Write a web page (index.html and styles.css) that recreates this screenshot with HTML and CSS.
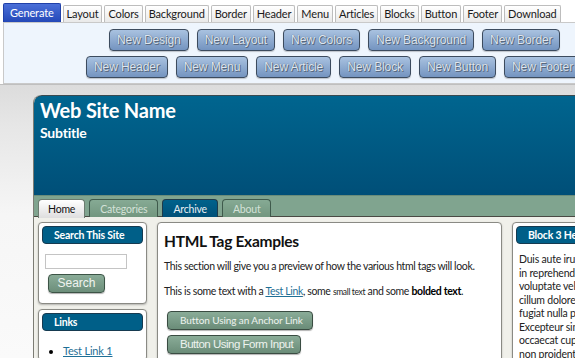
FILE: index.html
```html
<!DOCTYPE html>
<html>
<head>
<meta charset="utf-8">
<link rel="stylesheet" href="styles.css">
</head>
<body>
<div class="toolbar">
  <div class="tabs">
    <span class="tab active">Generate</span>
    <span class="tab">Layout</span>
    <span class="tab">Colors</span>
    <span class="tab">Background</span>
    <span class="tab">Border</span>
    <span class="tab">Header</span>
    <span class="tab">Menu</span>
    <span class="tab">Articles</span>
    <span class="tab">Blocks</span>
    <span class="tab">Button</span>
    <span class="tab">Footer</span>
    <span class="tab">Download</span>
  </div>
  <div class="panel">
    <div class="row row1">
      <span class="gbtn">New Design</span>
      <span class="gbtn">New Layout</span>
      <span class="gbtn">New Colors</span>
      <span class="gbtn">New Background</span>
      <span class="gbtn">New Border</span>
    </div>
    <div class="row row2">
      <span class="gbtn">New Header</span>
      <span class="gbtn">New Menu</span>
      <span class="gbtn">New Article</span>
      <span class="gbtn">New Block</span>
      <span class="gbtn">New Button</span>
      <span class="gbtn">New Footer</span>
    </div>
  </div>
</div>
<div class="stage">
  <div class="page">
    <header class="site-header">
      <h1>Web Site Name</h1>
      <h2>Subtitle</h2>
    </header>
    <nav class="menu">
      <a class="mtab current">Home</a>
      <a class="mtab">Categories</a>
      <a class="mtab hover">Archive</a>
      <a class="mtab">About</a>
    </nav>
    <div class="content">
      <aside class="sidebar">
        <div class="block">
          <div class="block-head">Search This Site</div>
          <div class="block-body search">
            <input class="field" type="text">
            <span class="sbtn">Search</span>
          </div>
        </div>
        <div class="block">
          <div class="block-head">Links</div>
          <ul class="links">
            <li><a href="#">Test Link 1</a></li>
          </ul>
        </div>
      </aside>
      <main class="article">
        <h3>HTML Tag Examples</h3>
        <p>This section will give you a preview of how the various html tags will look.</p>
        <p>This is some text with a <a href="#">Test Link</a>, some <small>small text</small> and some <b>bolded text</b>.</p>
        <div class="btns">
          <span class="abtn">Button Using an Anchor Link</span>
          <span class="ibtn">Button Using Form Input</span>
        </div>
      </main>
      <aside class="right">
        <div class="block">
          <div class="block-head">Block 3 Header</div>
          <p class="lorem">Duis aute irure dolor<br>in reprehenderit in<br>voluptate velit esse<br>cillum dolore eu<br>fugiat nulla pariatur.<br>Excepteur sint<br>occaecat cupidatat<br>non proident, sunt in<br>culpa qui officia.</p>
        </div>
      </aside>
    </div>
  </div>
</div>
</body>
</html>
```
FILE: styles.css
```css
html, body {
  margin: 0;
  padding: 0;
}
body {
  width: 575px;
  height: 358px;
  overflow: hidden;
  font-family: Lato, "Open Sans", sans-serif;
  letter-spacing: -0.2px;
  background: #f6f6f4;
}
.toolbar {
  padding: 3px 0 0 3px;
  background: #fff;
  width: 800px;
}
.tabs {
  display: flex;
  align-items: flex-end;
  gap: 2px;
  height: 19px;
}
.tab {
  height: 17px;
  box-sizing: border-box;
  padding: 0 3px;
  font-size: 11px;
  letter-spacing: -0.15px;
  line-height: 16px;
  color: #1a1a1a;
  border: 1px solid #bdbdbd;
  border-bottom: none;
  border-radius: 2px 2px 0 0;
  background: linear-gradient(#ffffff, #e9e9e9);
}
.tab.active {
  height: 19px;
  line-height: 18px;
  padding: 0 6px;
  color: #fff;
  border-color: #2040a8;
  background: linear-gradient(#4a6fd8, #2448b8);
}
.panel {
  height: 62px;
  box-sizing: border-box;
  border: 1px solid #c9c9c9;
  border-right: none;
  background: #eef5fd;
  padding-top: 6px;
  display: flex;
  flex-direction: column;
  gap: 5px;
}
.row {
  display: flex;
  gap: 8px;
}
.row1 { padding-left: 105px; }
.row2 { padding-left: 82px; }
.gbtn {
  height: 22px;
  box-sizing: border-box;
  padding: 0 7px;
  border: 1px solid #3c4b5e;
  border-radius: 4px;
  background: linear-gradient(#a9c2e0, #7494c0);
  color: #dfe6f0;
  text-shadow: 0 0 1px #4a5a70, 1px 1px 0 #5a6a80;
  font-family: "Liberation Sans", Arial, sans-serif;
  letter-spacing: -0.1px;
  font-size: 12px;
  line-height: 20px;
  white-space: nowrap;
  box-shadow: 0 1px 1px rgba(0,0,0,0.2);
}
.stage {
  height: 272px;
  background: linear-gradient(#dcdcdc 0px, #e6e6e6 40px, #f6f6f6 130px, #fafafa 272px);
  border-top: 1px solid #bfbfbf;
  padding: 10px 0 0 33px;
}
.page {
  width: 760px;
  border-left: 1px solid #7c7c74;
  border-radius: 8px 0 0 0;
  background: #f0f0ea;
  overflow: hidden;
}
.site-header {
  height: 100px;
  box-sizing: border-box;
  padding: 2px 0 0 6px;
  background: linear-gradient(#00658f, #004f78);
  border-top: 1px solid #3a4a50;
  border-radius: 8px 0 0 0;
  color: #fff;
}
.site-header h1 {
  margin: 0;
  font-size: 20px;
  line-height: 24px;
  font-weight: 700;
}
.site-header h2 {
  margin: 2px 0 0;
  font-size: 14px;
  line-height: 18px;
  font-weight: 700;
}
.menu {
  height: 22px;
  box-sizing: border-box;
  border-top: 1px solid #6a8c7a;
  border-bottom: 1px solid #4a4a44;
  background: #80a48f;
  padding: 3px 0 0 4px;
  display: flex;
  gap: 4px;
}
.mtab {
  height: 18px;
  box-sizing: border-box;
  padding: 0 10px;
  border: 1px solid #3f5a4c;
  border-bottom: none;
  border-radius: 4px 4px 0 0;
  background: linear-gradient(#86aa94, #72967f);
  color: #d4e2d8;
  font-size: 10.5px;
  line-height: 18px;
}
.mtab.current {
  height: 19px;
  padding: 0 9px;
  background: linear-gradient(#ffffff, #dedede);
  border-color: #6c7c70;
  color: #111;
}
.mtab.hover {
  background: linear-gradient(#00628c, #005078);
  border-color: #1e3a4a;
  color: #e8eef2;
}
.content {
  display: flex;
  align-items: flex-start;
  gap: 10px;
  padding: 5px 0 0 4px;
}
.block {
  background: #fff;
  border: 1px solid #8a8a84;
  border-radius: 4px;
  box-shadow: 0 1px 2px rgba(0,0,0,0.25);
  padding: 3px;
}
.sidebar {
  width: 109px;
  display: flex;
  flex-direction: column;
  gap: 5px;
}
.block-head {
  height: 18px;
  box-sizing: border-box;
  border: 1px solid #163a50;
  border-radius: 4px;
  background: #005f88;
  color: #fff;
  font-weight: 700;
  font-size: 10.5px;
  line-height: 16px;
  padding-left: 11px;
  white-space: nowrap;
}
.search {
  padding: 10px 0 7px 3px;
  display: flex;
  flex-direction: column;
  align-items: flex-start;
  gap: 5px;
}
.field {
  width: 82px;
  height: 15px;
  box-sizing: border-box;
  border: 1px solid #c4c4c4;
  margin: 0;
  padding: 0;
  background: #fff;
}
.sbtn {
  margin-left: 3px;
  width: 57px;
  height: 19px;
  box-sizing: border-box;
  border: 1px solid #3c5446;
  border-radius: 4px;
  background: linear-gradient(#8aac98, #6c8e7a);
  color: #f0f4f0;
  font-family: "Liberation Sans", Arial, sans-serif;
  letter-spacing: 0;
  font-size: 12px;
  line-height: 17px;
  text-align: center;
  box-shadow: 0 1px 1px rgba(0,0,0,0.3);
}
.links {
  margin: 13px 0 0;
  padding-left: 21px;
  font-size: 11px;
}
.links a, .article a {
  color: #1f6f96;
}
.article {
  width: 345px;
  box-sizing: border-box;
  min-height: 150px;
  background: #fff;
  border: 1px solid #8a8a84;
  border-radius: 4px;
  box-shadow: 0 1px 2px rgba(0,0,0,0.25);
  padding: 8px 6px;
  font-size: 10.5px;
  letter-spacing: -0.35px;
  color: #222;
}
.article h3 {
  margin: 0 0 9px;
  font-size: 15.5px;
  letter-spacing: -0.3px;
  line-height: 20px;
  color: #111;
}
.article p {
  margin: 0 0 12px;
  line-height: 13px;
}
.article small {
  font-size: 8.5px;
}
.article b { color: #000; }
.btns {
  display: flex;
  flex-direction: column;
  align-items: flex-start;
  gap: 5px;
  padding-left: 3px;
  margin-top: 10px;
}
.abtn, .ibtn {
  height: 19px;
  box-sizing: border-box;
  border: 1px solid #3a4c42;
  border-radius: 4px;
  background: linear-gradient(#8aac98, #6a8c78);
  color: #eef3ef;
  box-shadow: 0 1px 1px rgba(0,0,0,0.3);
  white-space: nowrap;
}
.abtn {
  width: 146px;
  font-size: 10px;
  letter-spacing: -0.1px;
  line-height: 17px;
  padding-left: 12px;
}
.ibtn {
  width: 134px;
  font-family: "Liberation Sans", Arial, sans-serif;
  letter-spacing: -0.5px;
  font-size: 11.5px;
  line-height: 17px;
  padding-left: 12px;
}
.right {
  width: 120px;
}
.lorem {
  margin: 9px 0 0 3px;
  font-size: 10.5px;
  line-height: 13.5px;
  color: #222;
  white-space: nowrap;
}
```
